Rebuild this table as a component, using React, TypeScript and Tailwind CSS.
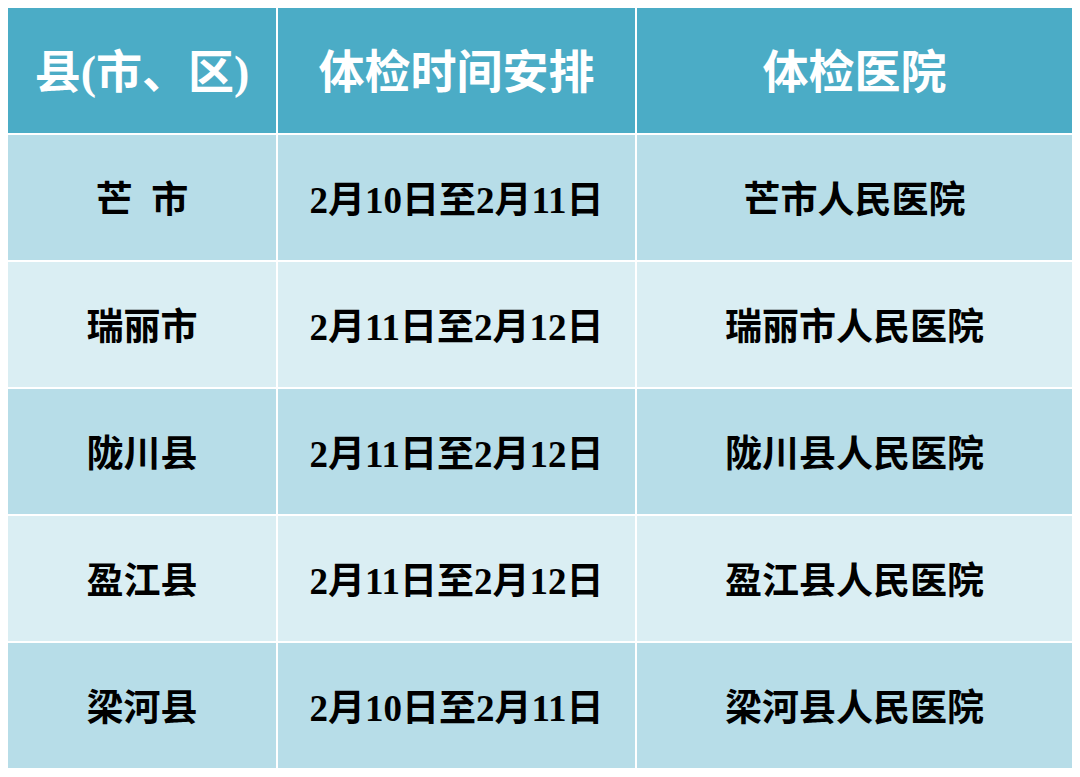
import React from 'react';

interface Row {
  county: string;
  date: string;
  hospital: string;
}

const rows: Row[] = [
  { county: '芒\u2002市', date: '2月10日至2月11日', hospital: '芒市人民医院' },
  { county: '瑞丽市', date: '2月11日至2月12日', hospital: '瑞丽市人民医院' },
  { county: '陇川县', date: '2月11日至2月12日', hospital: '陇川县人民医院' },
  { county: '盈江县', date: '2月11日至2月12日', hospital: '盈江县人民医院' },
  { county: '梁河县', date: '2月10日至2月11日', hospital: '梁河县人民医院' },
];

const font = { fontFamily: '"Liberation Serif", "Noto Sans CJK SC", serif' };

export default function App() {
  return (
    <div className="w-[1080px] h-[777px] bg-white p-2" style={font}>
      <div className="grid grid-cols-[268px_357px_435px] auto-rows-[125px] gap-[2px]">
        {/* Header */}
        <div className="bg-[#4bacc6] flex items-center justify-center pt-1 text-white text-[46px] font-bold">县(市、区)</div>
        <div className="bg-[#4bacc6] flex items-center justify-center pt-1 text-white text-[46px] font-bold">体检时间安排</div>
        <div className="bg-[#4bacc6] flex items-center justify-center pt-1 text-white text-[46px] font-bold">体检医院</div>

        {rows.map((row, index) => {
          const bg = index % 2 === 0 ? 'bg-[#b7dde8]' : 'bg-[#daeef3]';
          return (
            <React.Fragment key={index}>
              <div className={`${bg} flex items-center justify-center pt-[6px] text-black text-[37px] font-bold`}>{row.county}</div>
              <div className={`${bg} flex items-center justify-center pt-[6px] text-black text-[37px] font-bold`}>{row.date}</div>
              <div className={`${bg} flex items-center justify-center pt-[6px] text-black text-[37px] font-bold`}>{row.hospital}</div>
            </React.Fragment>
          );
        })}
      </div>
    </div>
  );
}
